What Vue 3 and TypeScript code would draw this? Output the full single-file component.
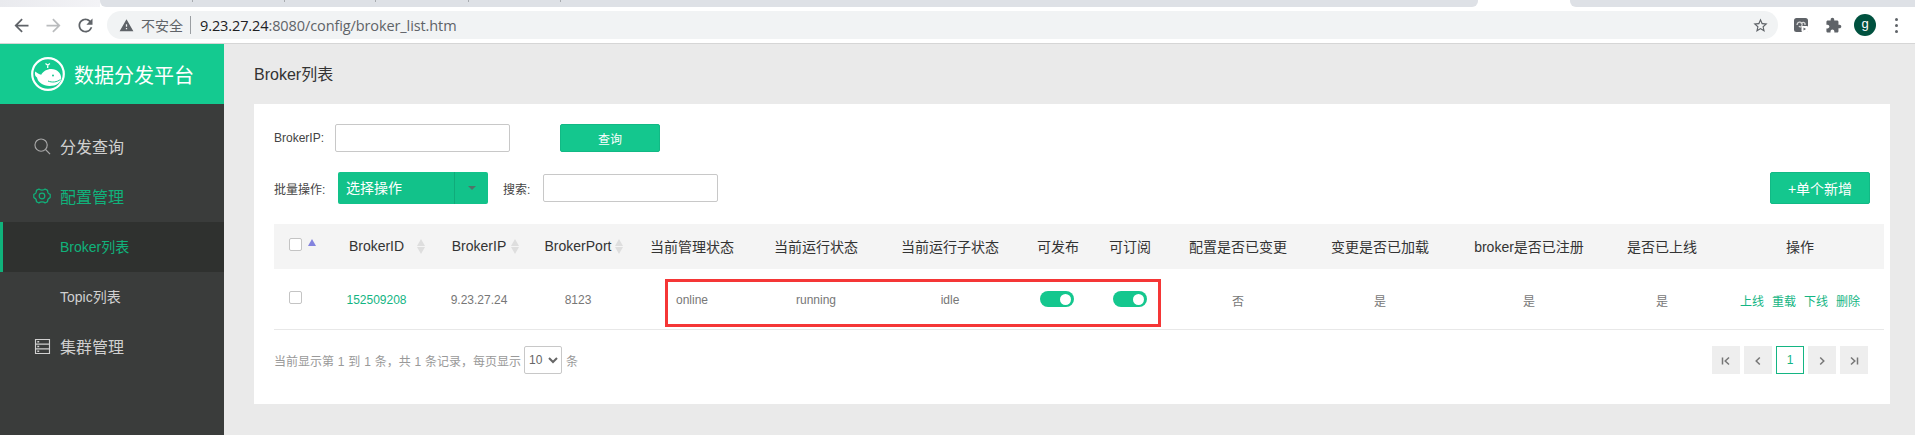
<script setup lang="ts">
interface Column { label: string; width: number; sortable?: boolean }

const columns: Column[] = [
  { label: 'BrokerID', width: 111, sortable: true },
  { label: 'BrokerIP', width: 94, sortable: true },
  { label: 'BrokerPort', width: 104, sortable: true },
  { label: '当前管理状态', width: 124 },
  { label: '当前运行状态', width: 124 },
  { label: '当前运行子状态', width: 144 },
  { label: '可发布', width: 72 },
  { label: '可订阅', width: 72 },
  { label: '配置是否已变更', width: 144 },
  { label: '变更是否已加载', width: 140 },
  { label: 'broker是否已注册', width: 158 },
  { label: '是否已上线', width: 108 },
  { label: '操作', width: 168 },
]

const plainBefore = ['9.23.27.24', '8123', 'online', 'running', 'idle']
const plainAfter = ['否', '是', '是', '是']
const actions = ['上线', '重载', '下线', '删除']
const separators = [192, 284, 375, 468, 560]
</script>

<template>
  <div class="page">
    <div class="tabstrip">
      <div class="strip-left"></div>
      <div class="strip-tabs">
        <i v-for="s in separators" :key="s" class="sep" :style="{ left: s - 100 + 'px' }"></i>
      </div>
      <div class="strip-active"></div>
      <div class="strip-right"></div>
    </div>

    <div class="toolbar">
      <svg class="nav-ico first" viewBox="0 0 24 24"><path fill="#5f6368" d="M20 11H7.83l5.59-5.59L12 4l-8 8 8 8 1.41-1.41L7.83 13H20v-2z"/></svg>
      <svg class="nav-ico" viewBox="0 0 24 24"><path fill="#babcbe" d="M12 4l-1.41 1.41L16.17 11H4v2h12.17l-5.58 5.59L12 20l8-8z"/></svg>
      <svg class="nav-ico" viewBox="0 0 24 24"><path fill="#5f6368" d="M17.65 6.35A7.958 7.958 0 0012 4c-4.42 0-7.99 3.58-7.99 8s3.57 8 7.99 8c3.73 0 6.84-2.55 7.73-6h-2.08A5.99 5.99 0 0112 18c-3.31 0-6-2.69-6-6s2.69-6 6-6c1.66 0 3.14.69 4.22 1.78L13 11h7V4l-2.35 2.35z"/></svg>
      <div class="omnibox">
        <svg class="warn" viewBox="0 0 24 24"><path fill="#5f6368" d="M1 21h22L12 2 1 21zm12-3h-2v-2h2v2zm0-4h-2v-4h2v4z"/></svg>
        <span class="insecure">不安全</span>
        <i class="omni-sep"></i>
        <span class="url"><b>9.23.27.24</b>:8080/config/broker_list.htm</span>
        <svg class="star" viewBox="0 0 24 24"><path fill="#5f6368" d="M22 9.24l-7.19-.62L12 2 9.19 8.63 2 9.24l5.46 4.73L5.82 21 12 17.27 18.18 21l-1.63-7.03L22 9.24zM12 15.4l-3.76 2.27 1-4.28-3.32-2.88 4.38-.38L12 6.1l1.71 4.04 4.38.38-3.32 2.88 1 4.28L12 15.4z"/></svg>
      </div>
      <svg class="ext" viewBox="0 0 14 14">
        <rect width="14" height="14" rx="2.5" fill="#5f6368"/>
        <path d="M3 7c0-3 4-4 5-1.500S6 10 5 8M7 6c1-2.500 4.500-2 4 1" fill="none" stroke="#d8d8d8" stroke-width="1.300"/>
        <rect x="7.500" y="8" width="6.500" height="6" rx="1" fill="#fff"/>
        <path d="M9.500 9.500l2.500 1.500-2.500 1.500z" fill="#5f6368"/>
      </svg>
      <svg class="puzzle" viewBox="0 0 24 24"><path fill="#5f6368" d="M20.5 11H19V7c0-1.100-.9-2-2-2h-4V3.500C13 2.120 11.880 1 10.500 1S8 2.120 8 3.500V5H4c-1.100 0-1.990.9-1.990 2v3.800H3.500c1.490 0 2.700 1.210 2.700 2.700s-1.210 2.700-2.700 2.700H2V20c0 1.100.9 2 2 2h3.800v-1.500c0-1.490 1.210-2.700 2.700-2.700 1.490 0 2.700 1.210 2.700 2.700V22H17c1.100 0 2-.9 2-2v-4h1.500c1.380 0 2.500-1.120 2.500-2.500S21.880 11 20.500 11z"/></svg>
      <span class="avatar">g</span>
      <span class="dots"><i></i><i></i><i></i></span>
    </div>

    <div class="main">
      <aside class="sidebar">
        <div class="brand">
          <svg class="whale" viewBox="0 0 34 34">
            <circle cx="17" cy="17" r="15.800" fill="none" stroke="#fff" stroke-width="2.200"/>
            <path fill="#fff" d="M4.200 14.500C6 16 8 17.300 10.200 17.800 12 14.300 16 12 20.300 12 26 12 30.200 16 30.200 21c0 4.500-4.800 8-11.700 8-6.500 0-11.500-3.600-12.500-8.500-1.800-1-2.600-3.300-1.800-6z"/>
            <path fill="none" stroke="#14ca90" stroke-width="1" d="M17 24c4 1.800 9 1.200 12.500-1.600"/>
            <path fill="none" stroke="#fff" stroke-width="1.300" d="M16.700 11V8M14.500 6.500l2.200 1.700 2.200-1.700"/>
            <circle cx="22" cy="18.500" r="1" fill="#14ca90"/>
          </svg>
          <span>数据分发平台</span>
        </div>
        <nav class="nav">
          <a class="nav-item">
            <svg class="side-ico" viewBox="0 0 18 18"><circle cx="7.500" cy="7.500" r="6.500" fill="none" stroke="#a8a8a8" stroke-width="1.200"/><path d="M12.200 12.200l4.800 4.800" stroke="#a8a8a8" stroke-width="1.200"/></svg>
            分发查询
          </a>
          <a class="nav-item on">
            <svg class="side-ico gear" viewBox="0 0 18 16"><path fill="none" stroke="#10b27b" stroke-width="1.200" stroke-linejoin="round" d="M6 1c.8 1.400 5.200 1.400 6 0l2.600 1.400c-.2 1.600.8 3.400 2.600 4v3.200c-1.800.6-2.800 2.400-2.600 4L12 15c-.8-1.400-5.200-1.400-6 0l-2.600-1.400c.2-1.600-.8-3.400-2.600-4V6.400c1.800-.6 2.800-2.400 2.600-4z"/><circle cx="9" cy="8" r="2.800" fill="none" stroke="#10b27b" stroke-width="1.200"/></svg>
            配置管理
          </a>
          <a class="nav-item sub active">Broker列表</a>
          <a class="nav-item sub">Topic列表</a>
          <a class="nav-item">
            <svg class="side-ico" viewBox="0 0 18 18"><path fill="none" stroke="#d0d0d0" stroke-width="1.200" d="M1.600 1.600h14.800v14.800H1.600zM1.600 6.500h14.800M1.600 11.500h14.800"/><path stroke="#d0d0d0" stroke-width="1.400" d="M3.500 4h2M3.500 9h2M3.500 14h2"/></svg>
            集群管理
          </a>
        </nav>
      </aside>

      <main class="content">
        <h1 class="title">Broker列表</h1>
        <section class="card">
          <div class="form-row first-row">
            <label class="lbl lbl-ip">BrokerIP:</label>
            <input class="field field-ip" type="text" />
            <button class="btn btn-query">查询</button>
          </div>
          <div class="form-row second-row">
            <label class="lbl lbl-batch">批量操作:</label>
            <div class="batch">
              <span class="batch-text">选择操作</span>
              <span class="batch-caret"><i></i></span>
            </div>
            <label class="lbl lbl-search">搜索:</label>
            <input class="field field-search" type="text" />
            <button class="btn btn-add">+单个新增</button>
          </div>

          <div class="table-wrap">
            <table class="grid">
              <colgroup>
                <col style="width: 47px" />
                <col v-for="c in columns" :key="c.label" :style="{ width: c.width + 'px' }" />
              </colgroup>
              <thead>
                <tr>
                  <th class="check-cell">
                    <span class="check"></span>
                    <i class="sort-asc"></i>
                  </th>
                  <th v-for="c in columns" :key="c.label">
                    {{ c.label }}
                    <span v-if="c.sortable" class="sorter"></span>
                  </th>
                </tr>
              </thead>
              <tbody>
                <tr>
                  <td class="check-cell"><span class="check"></span></td>
                  <td class="link">152509208</td>
                  <td v-for="v in plainBefore" :key="v">{{ v }}</td>
                  <td><span class="toggle publish"></span></td>
                  <td><span class="toggle"></span></td>
                  <td v-for="(v, i) in plainAfter" :key="i">{{ v }}</td>
                  <td class="actions">
                    <a v-for="a in actions" :key="a">{{ a }}</a>
                  </td>
                </tr>
              </tbody>
            </table>
            <div class="highlight"></div>
          </div>

          <div class="footer">
            <div class="info">
              <span class="info-text">当前显示第 1 到 1 条，共 1 条记录，每页显示</span>
              <select class="size"><option>10</option></select>
              <span>条</span>
            </div>
            <div class="pager">
              <span class="pg">
                <svg viewBox="0 0 10 10"><path d="M1.500 1.500v7M8 1.500L4.200 5 8 8.500" fill="none" stroke="#777" stroke-width="1.500"/></svg>
              </span>
              <span class="pg">
                <svg viewBox="0 0 10 10"><path d="M6.800 1.500L3.200 5l3.600 3.500" fill="none" stroke="#777" stroke-width="1.500"/></svg>
              </span>
              <span class="pg current">1</span>
              <span class="pg">
                <svg viewBox="0 0 10 10"><path d="M3.200 1.500L6.800 5 3.200 8.500" fill="none" stroke="#777" stroke-width="1.500"/></svg>
              </span>
              <span class="pg">
                <svg viewBox="0 0 10 10"><path d="M2 1.500L5.800 5 2 8.500M8.500 1.500v7" fill="none" stroke="#777" stroke-width="1.500"/></svg>
              </span>
            </div>
          </div>
        </section>
      </main>
    </div>
  </div>
</template>

<style>
html, body { margin: 0; padding: 0; overflow: hidden; }
</style>

<style scoped>
.page {
  width: 1915px;
  height: 435px;
  overflow: hidden;
  display: flex;
  flex-direction: column;
  font-family: "Liberation Sans", "Noto Sans CJK SC", sans-serif;
  background: #eaeaea;
}

/* browser chrome */
.tabstrip { height: 7px; display: flex; background: #fff; flex: none; }
.strip-left { width: 100px; background: linear-gradient(90deg, #e9eaee, #f3f3f6); }
.strip-tabs {
  position: relative;
  width: 1378px;
  background: #dee1e6;
  border-bottom-left-radius: 6px;
  border-bottom-right-radius: 6px;
}
.sep { position: absolute; top: 0; width: 1px; height: 2px; background: #a9acb0; }
.strip-active { width: 92px; background: #fff; }
.strip-right { flex: 1; background: #dee1e6; border-bottom-left-radius: 6px; }
.toolbar {
  height: 36px;
  flex: none;
  display: flex;
  align-items: center;
  background: #fff;
  border-bottom: 1px solid #d6d6d6;
  box-sizing: content-box;
}
.nav-ico { width: 21px; height: 21px; margin-right: 11px; flex: none; }
.nav-ico.first { margin-left: 11px; }
.omnibox {
  width: 1671px;
  height: 28px;
  flex: none;
  display: flex;
  align-items: center;
  background: #f1f3f4;
  border-radius: 14px;
  box-sizing: border-box;
  padding-left: 12px;
}
.warn { width: 15px; height: 15px; flex: none; }
.insecure { margin-left: 7px; font-size: 14px; color: #5f6368; width: 42px; }
.omni-sep { width: 1px; height: 18px; background: #9a9ea2; margin: 0 9px 0 7px; }
.url { font-family: "Open Sans", "Liberation Sans", sans-serif; font-size: 14.5px; color: #5f6368; letter-spacing: -.1px; flex: 1; }
.url b { font-weight: 400; color: #202124; }
.star { width: 17px; height: 17px; margin-right: 9px; flex: none; }
.ext { width: 14px; height: 14px; margin-left: 16px; flex: none; }
.puzzle { width: 17px; height: 17px; margin-left: 17px; flex: none; }
.avatar {
  width: 22px;
  height: 22px;
  border-radius: 50%;
  background: #00513f;
  color: #fff;
  font-size: 13px;
  line-height: 20px;
  text-align: center;
  margin-left: 12px;
  flex: none;
}
.dots { display: flex; flex-direction: column; gap: 3px; margin-left: 19px; flex: none; }
.dots i { width: 3px; height: 3px; border-radius: 50%; background: #5f6368; }

/* sidebar */
.main { flex: 1; display: flex; min-height: 0; }
.sidebar { width: 224px; flex: none; background: #3a3c3b; }
.brand {
  height: 60px;
  background: #14ca90;
  display: flex;
  align-items: center;
  padding-left: 31px;
  color: #fff;
  font-size: 20px;
}
.whale { width: 34px; height: 34px; margin-right: 9px; flex: none; }
.nav { padding-top: 18px; }
.nav-item {
  height: 50px;
  display: flex;
  align-items: center;
  padding-left: 34px;
  padding-bottom: 2px;
  color: #d0d0d0;
  font-size: 16px;
  box-sizing: border-box;
}
.side-ico { width: 17px; height: 17px; margin-right: 9px; flex: none; }
.side-ico.gear { width: 18px; height: 16px; margin-left: -1px; }
.nav-item.on { color: #10b27b; }
.nav-item.sub { font-size: 14px; padding-left: 60px; }
.nav-item.active {
  background: #2f312f;
  color: #10b27b;
  border-left: 3px solid #10b27b;
  padding-left: 57px;
}

/* content */
.content { flex: 1; min-width: 0; padding-left: 30px; }
.title {
  margin: 0;
  height: 60px;
  line-height: 62px;
  font-size: 16px;
  font-weight: 400;
  color: #333;
}
.card {
  width: 1636px;
  height: 300px;
  background: #fff;
  box-sizing: border-box;
  padding: 20px 6px 0 20px;
}
.form-row { display: flex; align-items: center; }
.first-row { height: 28px; }
.second-row { height: 32px; margin-top: 20px; }
.lbl { font-size: 12px; color: #444; flex: none; }
.lbl-ip { width: 61px; }
.lbl-batch { width: 64px; }
.lbl-search { width: 40px; margin-left: 15px; }
.field {
  height: 28px;
  box-sizing: border-box;
  border: 1px solid #c8c8c8;
  border-radius: 2px;
  background: #fff;
  padding: 0 6px;
  outline: none;
  flex: none;
}
.field-ip { width: 175px; }
.field-search { width: 175px; }
.btn {
  border: 1px solid #12b985;
  border-radius: 2px;
  background: #14c78e;
  color: #fff;
  font-family: inherit;
  padding: 0;
  flex: none;
}
.btn-query { width: 100px; height: 28px; margin-left: 50px; font-size: 12px; }
.btn-add { width: 100px; height: 32px; margin-left: auto; margin-right: 14px; font-size: 14px; }
.batch {
  width: 150px;
  height: 32px;
  display: flex;
  background: #12c28a;
  border-radius: 2px;
  color: #fff;
  font-size: 14px;
  flex: none;
}
.batch-text { width: 116px; line-height: 32px; padding-left: 8px; box-sizing: border-box; }
.batch-caret {
  flex: 1;
  border-left: 1px solid #10ab7a;
  display: flex;
  align-items: center;
  justify-content: center;
}
.batch-caret i {
  width: 0;
  height: 0;
  border: 4px solid transparent;
  border-top: 4px solid #4f7468;
  border-bottom: 0;
}

/* table */
.table-wrap { position: relative; margin-top: 20px; }
.grid {
  width: 1610px;
  table-layout: fixed;
  border-collapse: separate;
  border-spacing: 0;
}
.grid th {
  position: relative;
  height: 45px;
  box-sizing: border-box;
  padding: 0 0 2px;
  background: #f4f4f4;
  color: #333;
  font-size: 14px;
  font-weight: 400;
  text-align: center;
}
.grid td {
  height: 61px;
  box-sizing: border-box;
  padding: 2px 0 0;
  border-bottom: 1px solid #e8e8e8;
  color: #777;
  font-size: 12px;
  text-align: center;
}
.grid .check-cell { text-align: left; padding-left: 15px; }
.grid td.link { color: #14b583; }
.check {
  display: inline-block;
  width: 13px;
  height: 13px;
  box-sizing: border-box;
  border: 1px solid #c4c4c4;
  border-radius: 2px;
  background: #fff;
  position: relative;
  top: -2px;
  vertical-align: middle;
}
.grid td .check { top: -3px; }
.sort-asc {
  position: absolute;
  left: 34px;
  top: 15px;
  width: 0;
  height: 0;
  border-left: 4.500px solid transparent;
  border-right: 4.500px solid transparent;
  border-bottom: 7px solid #8383de;
}
.sorter {
  position: absolute;
  right: 6px;
  top: 15px;
  width: 9px;
  height: 15px;
}
.sorter::before, .sorter::after {
  content: "";
  position: absolute;
  left: 0;
  width: 0;
  height: 0;
  border-left: 4.500px solid transparent;
  border-right: 4.500px solid transparent;
}
.sorter::before { top: 0; border-bottom: 7px solid #dedede; }
.sorter::after { bottom: 0; border-top: 7px solid #dedede; }
.toggle {
  display: inline-block;
  position: relative;
  width: 34px;
  height: 16px;
  border-radius: 8px;
  background: #14c78e;
  vertical-align: middle;
  top: -1px;
}
.toggle.publish { margin-right: 2px; }
.toggle::after {
  content: "";
  position: absolute;
  right: 3px;
  top: 2.500px;
  width: 11px;
  height: 11px;
  border-radius: 50%;
  background: #fff;
}
.actions a { color: #14b583; margin-right: 8px; }
.actions a:last-child { margin-right: 0; }
.highlight {
  position: absolute;
  left: 391px;
  top: 55px;
  width: 496px;
  height: 48px;
  box-sizing: border-box;
  border: 3px solid #f53636;
  pointer-events: none;
}

/* footer */
.footer {
  display: flex;
  justify-content: space-between;
  align-items: center;
  height: 28px;
  margin-top: 16px;
  width: 1610px;
}
.info { display: flex; align-items: center; font-size: 12px; color: #999; }
.info-text { word-spacing: .5px; }
.size {
  width: 38px;
  height: 28px;
  margin: 0 4px 0 3px;
  border: 1px solid #c8c8c8;
  border-radius: 2px;
  background: #fff;
  color: #666;
  font-size: 12px;
  font-family: inherit;
  padding: 0;
}
.pager { display: flex; gap: 4px; margin-right: 16px; }
.pg {
  width: 28px;
  height: 28px;
  box-sizing: border-box;
  background: #eeeeee;
  display: flex;
  align-items: center;
  justify-content: center;
  font-size: 12px;
}
.pg svg { width: 10px; height: 10px; margin-top: 2px; }
.pg.current { background: #fff; border: 1px solid #14b583; color: #14b583; }
</style>
